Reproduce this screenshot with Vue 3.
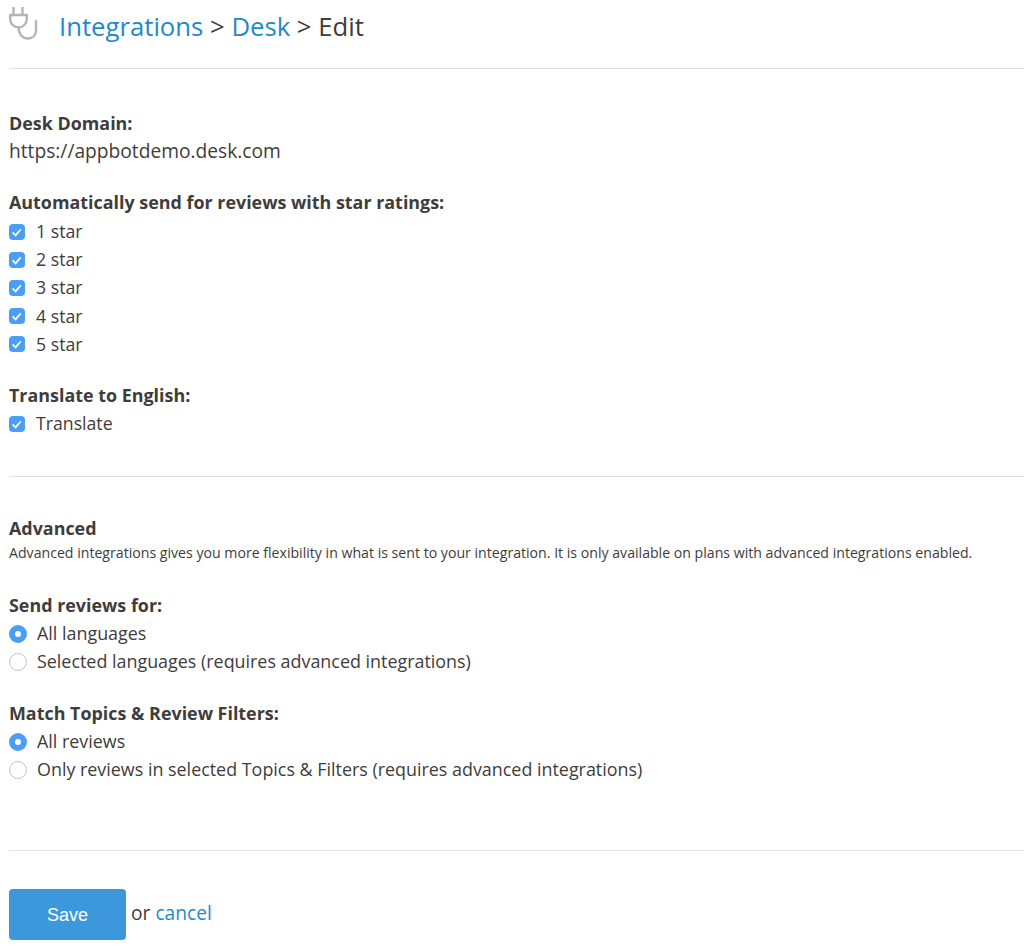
<template>
  <div class="page">
    <div class="header">
      <svg class="plug" width="30" height="34" viewBox="0 0 30 34" fill="none">
        <path d="M4.500 0v8M13.500 0v8" stroke="#b5b5b5" stroke-width="2.400" />
        <path d="M1.200 8h16.600v4a8.300 8.500 0 0 1-16.600 0z" stroke="#b5b5b5" stroke-width="2.400" stroke-linejoin="round" />
        <path d="M9.500 20.500c0 6 3.500 11 9.500 11c5 0 8-3.500 8-8v-9.500" stroke="#b5b5b5" stroke-width="2.400" stroke-linecap="round" />
      </svg>
      <h1 class="crumbs">
        <a href="#">Integrations</a> &gt; <a href="#">Desk</a> &gt; Edit
      </h1>
    </div>
    <hr class="line" />

    <section class="first">
      <div class="label">Desk Domain:</div>
      <div class="domain">https://appbotdemo.desk.com</div>

      <div class="label ratings-label">Automatically send for reviews with star ratings:</div>
      <label class="check-row" v-for="n in 5" :key="n">
        <span class="check">
          <svg width="16" height="16" viewBox="0 0 16 16" fill="none">
            <path d="M3.600 8.400l3 3l5.200-6.200" stroke="#fff" stroke-width="1.700" />
          </svg>
        </span>
        {{ n }} star
      </label>

      <div class="label translate-label">Translate to English:</div>
      <label class="check-row">
        <span class="check">
          <svg width="16" height="16" viewBox="0 0 16 16" fill="none">
            <path d="M3.600 8.400l3 3l5.200-6.200" stroke="#fff" stroke-width="1.700" />
          </svg>
        </span>
        Translate
      </label>
    </section>
    <hr class="line" />

    <section class="advanced">
      <div class="label">Advanced</div>
      <p class="note">Advanced integrations gives you more flexibility in what is sent to your integration. It is only available on plans with advanced integrations enabled.</p>

      <div v-for="group in radioGroups" :key="group.title" class="radio-group">
        <div class="label">{{ group.title }}</div>
        <label class="radio-row" v-for="(opt, i) in group.options" :key="opt">
          <span class="radio" :class="{ on: i === 0 }"></span>
          {{ opt }}
        </label>
      </div>
    </section>
    <hr class="line" />

    <div class="actions">
      <button class="save">Save</button>
      <span class="or">or <a href="#">cancel</a></span>
    </div>
  </div>
</template>

<script setup>
const radioGroups = [
  {
    title: 'Send reviews for:',
    options: ['All languages', 'Selected languages (requires advanced integrations)']
  },
  {
    title: 'Match Topics & Review Filters:',
    options: ['All reviews', 'Only reviews in selected Topics & Filters (requires advanced integrations)']
  }
];
</script>

<style>
html, body {
  background: #fff;
}
</style>

<style scoped>
.page {
  width: 1024px;
  height: 948px;
  overflow: hidden;
  box-sizing: border-box;
  padding: 0 0 0 9px;
  font-family: "Open Sans", "Liberation Sans", sans-serif;
  font-size: 18px;
  color: #3f3c3c;
}

a {
  color: #1f8acb;
  text-decoration: none;
}

.header {
  height: 68px;
  display: flex;
  align-items: flex-start;
}

.plug {
  margin-top: 7px;
  flex: none;
}

.crumbs {
  margin: 8px 0 0 20px;
  font-size: 25.700px;
  line-height: 38px;
  font-weight: 400;
}

.line {
  margin: 0;
  border: none;
  border-top: 1px solid #dfe3e6;
}

.first {
  height: 407px;
  box-sizing: border-box;
  padding-top: 40px;
}

.label {
  font-weight: 700;
  line-height: 28px;
  font-size: 17.900px;
}

.domain {
  line-height: 28px;
  font-size: 19.200px;
}

.ratings-label {
  margin-top: 23px;
  margin-bottom: 1px;
}

.translate-label {
  margin-top: 23px;
}

.check-row {
  display: flex;
  align-items: center;
  height: 28.200px;
  font-size: 17.700px;
}

.check {
  width: 16px;
  height: 16px;
  margin-right: 11px;
  margin-top: 1px;
  border-radius: 4px;
  background: #4a9ff5;
  display: flex;
  align-items: center;
  justify-content: center;
}

.advanced {
  height: 373px;
  box-sizing: border-box;
  padding-top: 37px;
}

.note {
  margin: 0;
  font-size: 14.130px;
  line-height: 22px;
}

.radio-group {
  margin-top: 27px;
}

.radio-group + .radio-group {
  margin-top: 24px;
}

.radio-row {
  display: flex;
  align-items: center;
  height: 28px;
  font-size: 17.900px;
}

.radio {
  width: 18px;
  height: 18px;
  margin-right: 10px;
  margin-top: 1px;
  border-radius: 50%;
  box-sizing: border-box;
  border: 1px solid #c4c4c4;
  background: #fff;
}

.radio.on {
  border: 6px solid #4a9ff5;
}

.actions {
  margin-top: 38px;
  display: flex;
  align-items: center;
}

.save {
  width: 117px;
  height: 51px;
  padding-top: 3px;
  border: none;
  border-radius: 4px;
  background: #3c98db;
  color: #fff;
  font-family: "Liberation Sans", sans-serif;
  font-size: 18px;
}

.or {
  margin-left: 5px;
  margin-top: -4px;
  font-size: 19.200px;
}
</style>
